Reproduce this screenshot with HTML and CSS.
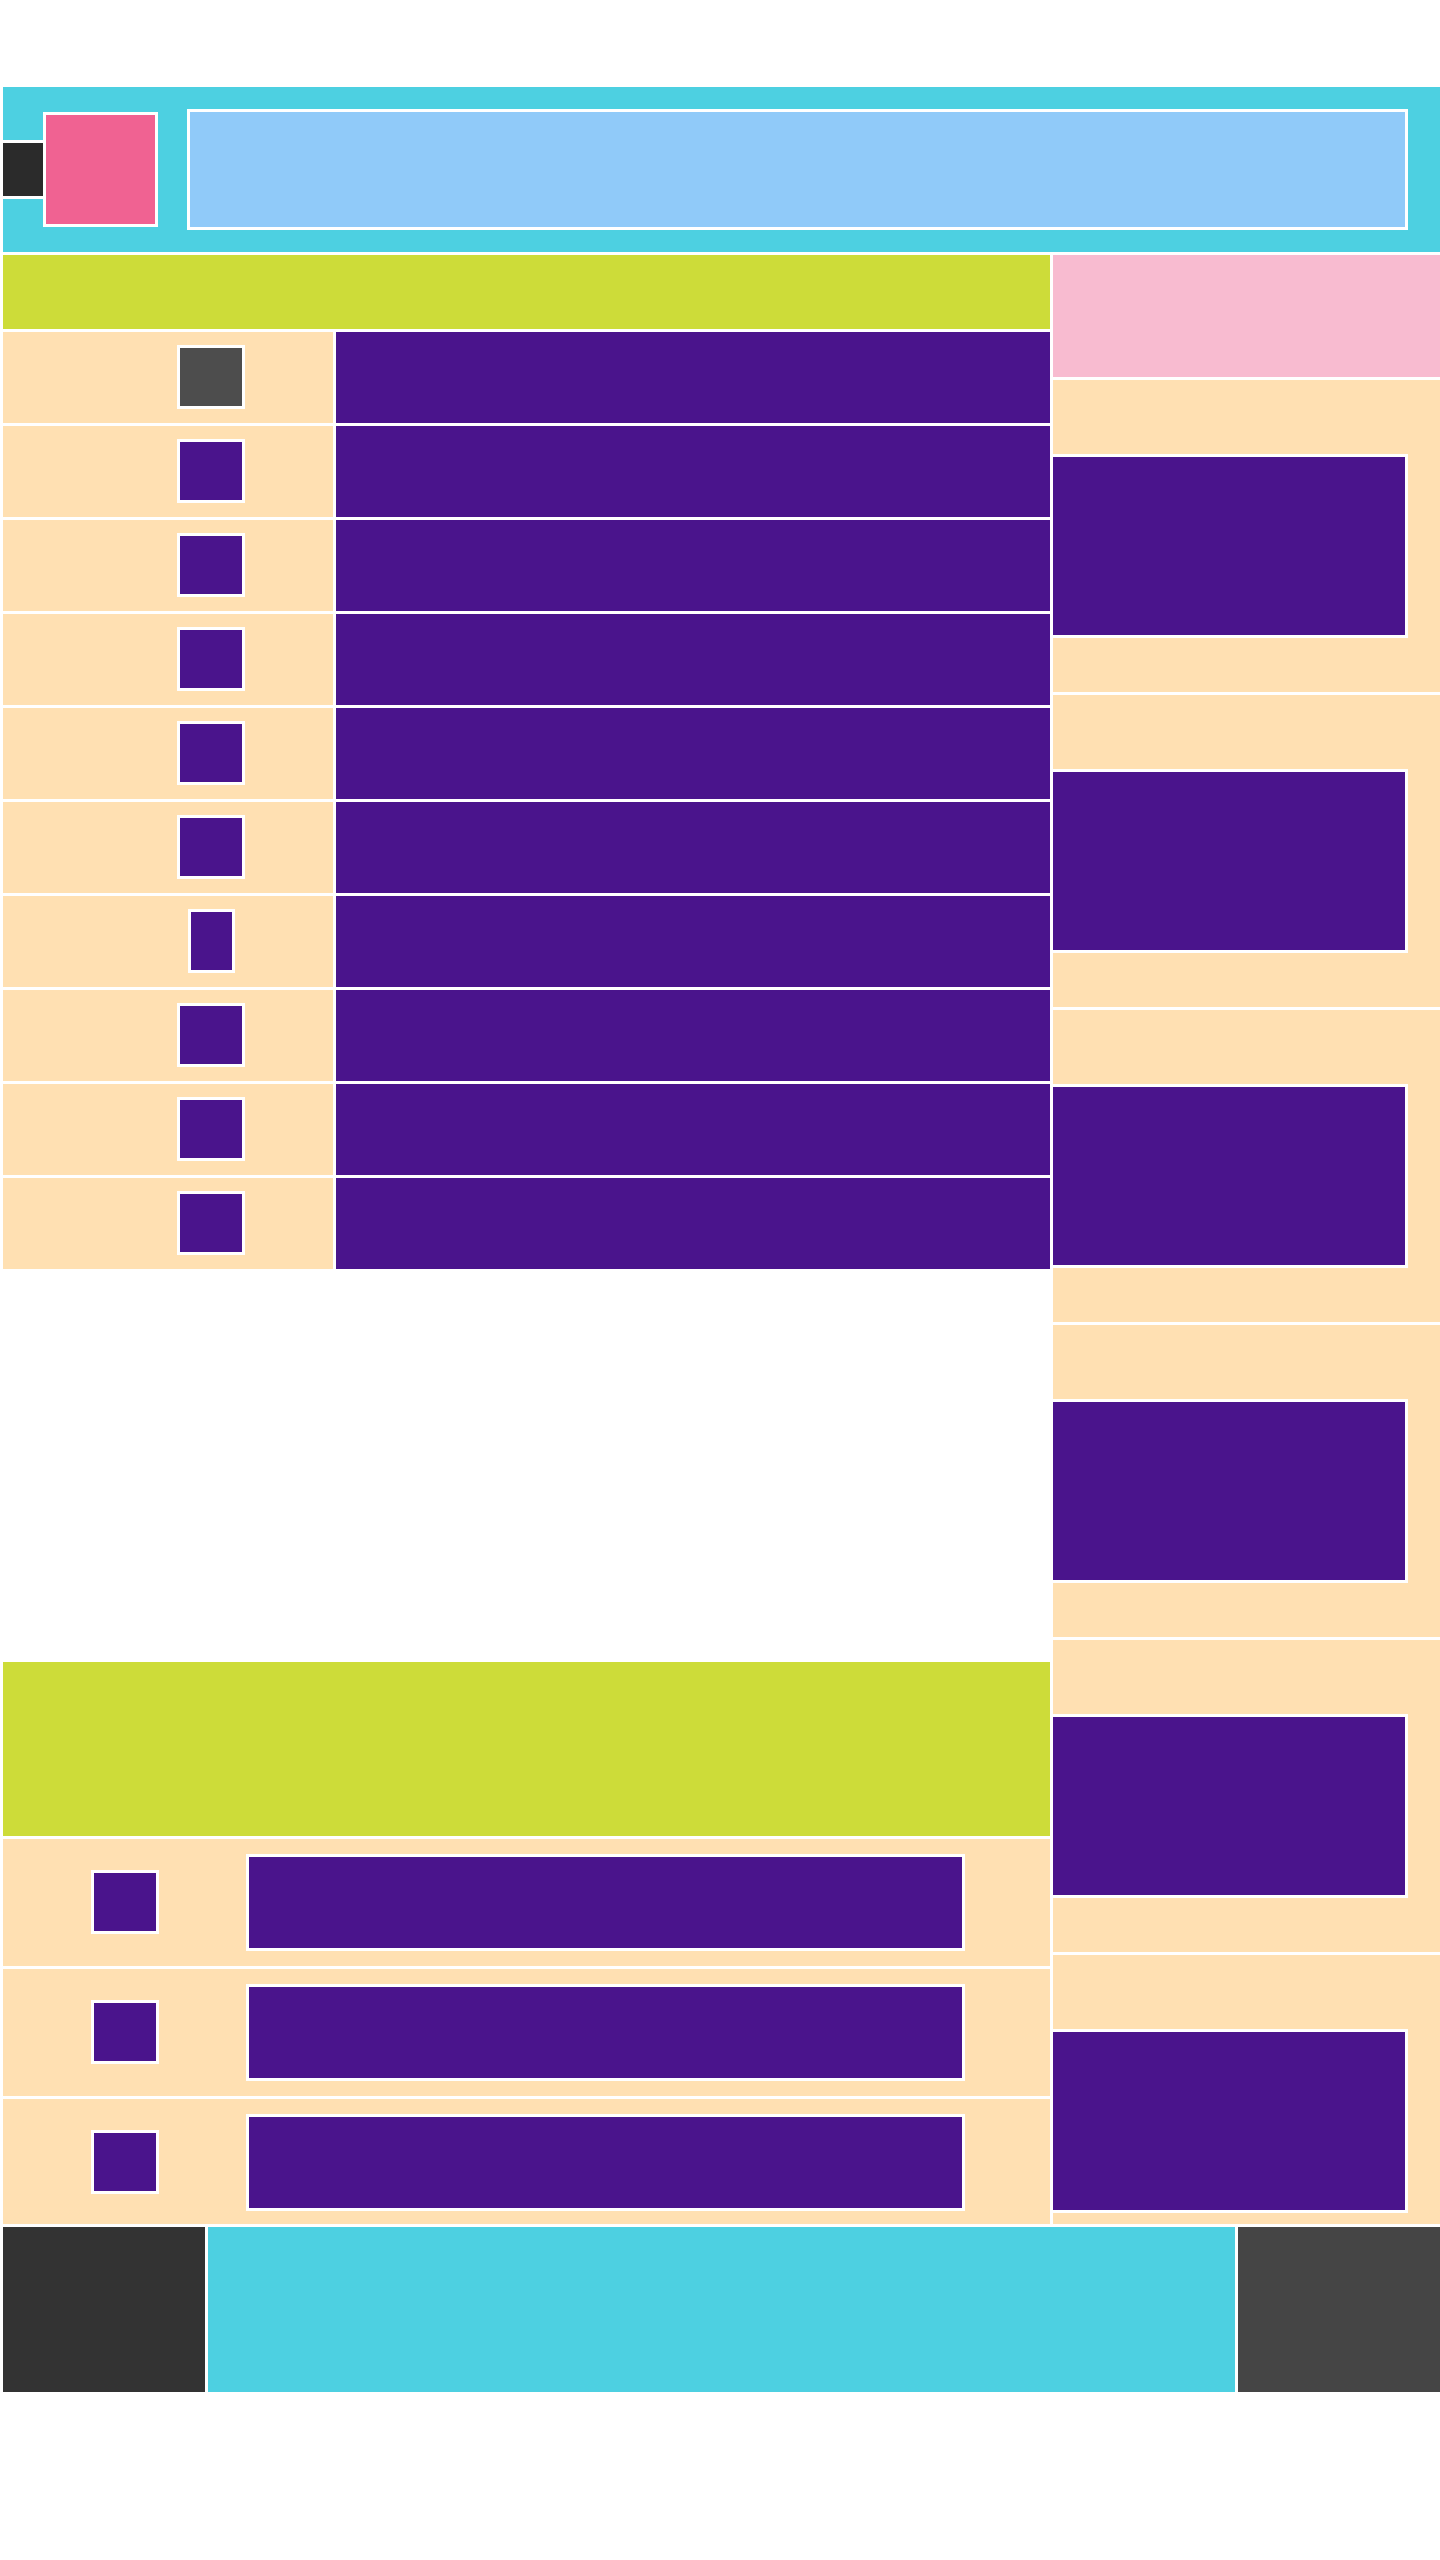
FILE: index.html
```html
<!DOCTYPE html>
<html lang="en">
<head>
    <meta charset="UTF-8">
    <meta name="viewport" content="width=device-width, initial-scale=1.0">
    <title>Layout</title>
    <link rel="stylesheet" href="styles.css">
</head>
<body>
    <div class="page">
        <header class="topbar">
            <div class="menu-toggle"></div>
            <div class="logo"></div>
            <div class="search"></div>
        </header>

        <main class="content">
            <div class="main-col">
                <div class="section-head"></div>
                <div class="list">
                    <div class="list-row"><div class="list-cell"><div class="thumb thumb-dark"></div></div><div class="list-title"></div></div>
                    <div class="list-row"><div class="list-cell"><div class="thumb"></div></div><div class="list-title"></div></div>
                    <div class="list-row"><div class="list-cell"><div class="thumb"></div></div><div class="list-title"></div></div>
                    <div class="list-row"><div class="list-cell"><div class="thumb"></div></div><div class="list-title"></div></div>
                    <div class="list-row"><div class="list-cell"><div class="thumb"></div></div><div class="list-title"></div></div>
                    <div class="list-row"><div class="list-cell"><div class="thumb"></div></div><div class="list-title"></div></div>
                    <div class="list-row"><div class="list-cell"><div class="thumb thumb-narrow"></div></div><div class="list-title"></div></div>
                    <div class="list-row"><div class="list-cell"><div class="thumb"></div></div><div class="list-title"></div></div>
                    <div class="list-row"><div class="list-cell"><div class="thumb"></div></div><div class="list-title"></div></div>
                    <div class="list-row"><div class="list-cell"><div class="thumb"></div></div><div class="list-title"></div></div>
                </div>

                <div class="section-head section-head-tall"></div>
                <div class="cards">
                    <div class="card-row"><div class="card-icon"><div class="thumb"></div></div><div class="card-bar"></div></div>
                    <div class="card-row"><div class="card-icon"><div class="thumb"></div></div><div class="card-bar"></div></div>
                    <div class="card-row"><div class="card-icon"><div class="thumb"></div></div><div class="card-bar"></div></div>
                </div>
            </div>

            <aside class="sidebar">
                <div class="side-head"></div>
                <div class="side-panel"><div class="side-block"></div></div>
                <div class="side-panel"><div class="side-block"></div></div>
                <div class="side-panel"><div class="side-block"></div></div>
                <div class="side-panel"><div class="side-block"></div></div>
                <div class="side-panel"><div class="side-block"></div></div>
                <div class="side-panel"><div class="side-block"></div></div>
            </aside>
        </main>

        <footer class="footer">
            <div class="footer-left"></div>
            <div class="footer-mid"></div>
            <div class="footer-right"></div>
        </footer>
    </div>
</body>
</html>
```

FILE: styles.css
```css
* {
    box-sizing: border-box;
}
body {
    margin: 0;
    background-color: #fff;
    font-family: "Liberation Sans", Arial, sans-serif;
}
.page {
    padding: 87px 0 0 3px;
    display: flex;
    flex-direction: column;
    gap: 3px;
}

/* header */
.topbar {
    height: 165px;
    background-color: #4dd0e1;
    display: flex;
    align-items: center;
}
.menu-toggle {
    width: 40px;
    height: 59px;
    background-color: #2b2b2b;
    border-top: 3px solid #fff;
    border-bottom: 3px solid #fff;
}
.logo {
    width: 115px;
    height: 115px;
    background-color: #f06292;
    border: 3px solid #fff;
}
.search {
    width: 1221px;
    height: 121px;
    margin-left: 29px;
    background-color: #90caf9;
    border: 3px solid #fff;
}

/* main area */
.content {
    height: 1969px;
    display: flex;
    gap: 3px;
    overflow: hidden;
}
.main-col {
    width: 1047px;
    display: flex;
    flex-direction: column;
    gap: 3px;
}
.section-head {
    height: 74px;
    flex-shrink: 0;
    background-color: #cddc39;
}
.section-head-tall {
    height: 174px;
    margin-top: 390px;
}
.list {
    display: flex;
    flex-direction: column;
    gap: 3px;
}
.list-row {
    height: 91px;
    display: flex;
    gap: 3px;
}
.list-cell {
    width: 330px;
    background-color: #ffe0b2;
    display: flex;
    align-items: center;
    justify-content: center;
    padding-left: 86px;
}
.list-title {
    flex: 1;
    background-color: #4a148c;
}
.thumb {
    width: 68px;
    height: 64px;
    margin-bottom: 1px;
    background-color: #4a148c;
    border: 3px solid #fff;
}
.thumb-dark {
    background-color: #4d4d4d;
}
.thumb-narrow {
    width: 47px;
}

.cards {
    display: flex;
    flex-direction: column;
    gap: 3px;
}
.card-row {
    height: 127px;
    flex-shrink: 0;
    background-color: #ffe0b2;
    display: grid;
    grid-template-columns: 243px 719px;
    align-items: center;
}
.card-icon {
    display: flex;
    justify-content: center;
}
.card-bar {
    height: 97px;
    background-color: #4a148c;
    border: 3px solid #fff;
}

/* sidebar */
.sidebar {
    flex: 1;
    display: flex;
    flex-direction: column;
    gap: 3px;
}
.side-head {
    height: 122px;
    flex-shrink: 0;
    background-color: #f8bbd0;
}
.side-panel {
    height: 312px;
    flex-shrink: 0;
    background-color: #ffe0b2;
    padding-top: 74px;
}
.side-block {
    width: 355px;
    height: 184px;
    background-color: #4a148c;
    border: 3px solid #fff;
    border-left: 0;
}

/* footer */
.footer {
    height: 165px;
    display: flex;
    gap: 3px;
}
.footer-left {
    width: 202px;
    background-color: #333;
}
.footer-mid {
    flex: 1;
    background-color: #4dd0e1;
}
.footer-right {
    width: 202px;
    background-color: #454545;
}
```
